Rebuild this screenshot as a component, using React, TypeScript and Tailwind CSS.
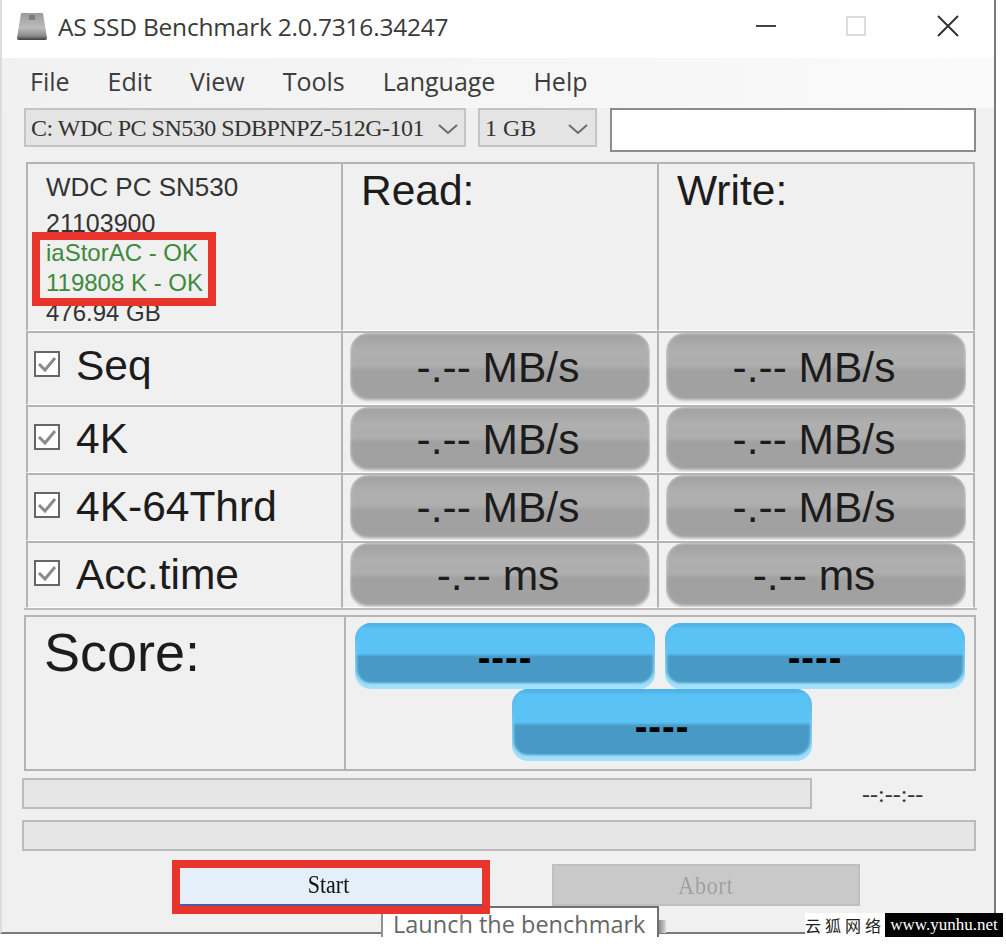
import React from "react";

const MENU = ["File", "Edit", "View", "Tools", "Language", "Help"];

function Chevron() {
  return (
    <svg width="22" height="12" viewBox="0 0 22 12" fill="none" stroke="#6b6b6b" strokeWidth="2" className="mt-[3px] shrink-0">
      <path d="M2 2l9 8 9-8" />
    </svg>
  );
}

function Check() {
  return (
    <span className="mb-[5px] flex h-[26px] w-[26px] shrink-0 items-center justify-center border-2 border-[#666] bg-white">
      <svg width="20" height="18" viewBox="0 0 20 18" fill="none" stroke="#8a8a8a" strokeWidth="3">
        <path d="M2 9l6 6L18 3" />
      </svg>
    </span>
  );
}

function GrayValue({ text, tall }: { text: string; tall: boolean }) {
  return (
    <div className={`relative mx-auto w-[300px] overflow-hidden rounded-[18px] ${tall ? "h-[70px]" : "h-[66px]"}`}>
      <div className="absolute inset-x-0 top-0 bottom-[3px] overflow-hidden rounded-[18px] blur-[1.5px]">
        <div className="h-[52%] bg-gradient-to-b from-[#a0a0a0] via-[#afafaf] to-[#adadad]" />
        <div className="h-[48%] bg-[#a1a1a1]" />
      </div>
      <div className="relative flex h-full items-center justify-center pr-[4px] text-[42.5px] leading-none text-[#1c1c1c]">
        {text}
      </div>
    </div>
  );
}

function BlueValue({ className }: { className: string }) {
  return (
    <div className={`relative overflow-hidden rounded-[16px] bg-gradient-to-b from-[#4fb2e6] to-[#a5e2fb] ${className}`}>
      <div className="absolute inset-x-[2px] top-0 bottom-[6px] flex flex-col overflow-hidden rounded-[14px] blur-[1px]">
        <div className="flex-1 border-t-[4px] border-[#4fb2e6] bg-[#5bc2f5]" />
        <div className="flex-1 bg-[#4899c6]" />
      </div>
      <div className="relative flex h-full items-center justify-center pt-[4px] text-[38px] font-bold leading-none tracking-[1px] text-[#000]">
        ----
      </div>
    </div>
  );
}

const cell = "border-t-2 border-l-2 border-b border-t-[#b4b4b4] border-l-[#b4b4b4] border-b-white";

const ROWS = [
  { label: "Seq", unit: "-.-- MB/s" },
  { label: "4K", unit: "-.-- MB/s" },
  { label: "4K-64Thrd", unit: "-.-- MB/s" },
  { label: "Acc.time", unit: "-.-- ms" },
];

export default function App() {
  return (
    <div className="relative h-[948px] w-[1006px] overflow-hidden bg-white font-['Liberation_Sans',Arial,sans-serif]">
      <div className="flex h-[934px] w-[996px] flex-col border-r-2 border-b-2 border-l-2 border-r-[#7a7a7a] border-b-[#7a7a7a] border-l-[#dcdcdc] bg-[#f0f0f0]">
        {/* title bar */}
        <div className="flex h-[58px] shrink-0 items-center bg-white pb-[4px] pl-[14px] font-['Open_Sans',sans-serif] text-[#3a3a3a]">
          <svg width="32" height="28" viewBox="0 0 32 28" className="mb-[2px]">
            <defs>
              <linearGradient id="drive" x1="0" y1="0" x2="0" y2="1">
                <stop offset="0" stopColor="#9a9a9a" />
                <stop offset="0.55" stopColor="#bcbcbc" />
                <stop offset="0.85" stopColor="#8a8a8a" />
                <stop offset="1" stopColor="#3c3c3c" />
              </linearGradient>
            </defs>
            <path d="M5 1h22l4 25q0 2-2 2H3q-2 0-2-2z" fill="url(#drive)" />
            <path d="M13 3h6v5h-6z" fill="#7c7c7c" />
          </svg>
          <span className="ml-[10px] text-[24.5px] leading-none tracking-[-0.2px]">AS SSD Benchmark 2.0.7316.34247</span>
          <div className="ml-auto flex items-center pb-[2px]">
            <span className="h-[2px] w-[20px] bg-[#444]" />
            <span className="ml-[70px] h-[20px] w-[20px] border-2 border-[#dddddd]" />
            <svg width="22" height="22" viewBox="0 0 22 22" stroke="#333" strokeWidth="2" className="mr-[35px] ml-[71px]">
              <path d="M1 1l20 20M21 1L1 21" />
            </svg>
          </div>
        </div>

        {/* menu */}
        <div className="flex h-[50px] shrink-0 items-center gap-[38px] bg-gradient-to-r from-[#f1f1f1] to-[#fafafa] pb-[3px] pl-[28px] font-['Open_Sans',sans-serif] text-[25px] text-[#3c3c3c]">
          {MENU.map((m) => (
            <span key={m}>{m}</span>
          ))}
        </div>

        {/* selects */}
        <div className="flex h-[54px] shrink-0 items-start pl-[22px] font-['Liberation_Serif',serif] text-[24px] text-[#333]">
          <div className="flex h-[39px] w-[442px] items-center justify-between whitespace-nowrap border-2 border-[#c4c4c4] bg-[#e4e4e4] px-[5px]">
            <span className="tracking-[-0.5px]">C: WDC PC SN530 SDBPNPZ-512G-101</span>
            <Chevron />
          </div>
          <div className="ml-[12px] flex h-[39px] w-[119px] items-center justify-between border-2 border-[#c4c4c4] bg-[#e4e4e4] pr-[6px] pl-[5px]">
            <span>1 GB</span>
            <Chevron />
          </div>
          <div className="ml-[13px] h-[44px] w-[366px] border-2 border-[#8c8c8c] bg-white" />
        </div>

        {/* results */}
        <div className="ml-[22px] w-[953px] border-b-2 border-[#bcbcbc] pl-[2px]">
          <div className="grid w-[949px] grid-cols-[315px_316px_318px] grid-rows-[169px_74px_68px_68px_67px] text-[#1c1c1c]">
            <div className={`${cell} pt-[5px] pl-[18px]`}>
              <div className="h-[36px] text-[26px] leading-[36px] text-[#333]">WDC PC SN530</div>
              <div className="h-[33px] text-[25px] leading-[36px] text-[#333]">21103900</div>
              <div className="h-[30px] text-[24px] leading-[30px] text-[#3d8a3d]">iaStorAC - OK</div>
              <div className="h-[30px] text-[24px] leading-[30px] text-[#3d8a3d]">119808 K - OK</div>
              <div className="text-[24px] leading-[30px] text-[#333]">476.94 GB</div>
            </div>
            <div className={`${cell} pt-[3px] pl-[18px] text-[42.5px] leading-[48px]`}>Read:</div>
            <div className={`${cell} border-r-2 border-r-[#b4b4b4] pt-[3px] pl-[18px] text-[42.5px] leading-[48px]`}>Write:</div>

            {ROWS.map((r) => (
              <React.Fragment key={r.label}>
                <div className={`${cell} flex items-center gap-[16px] pl-[6px] text-[42.5px] leading-none ${r.label === "Seq" ? "pb-[5px]" : ""}`}>
                  <Check />
                  <span>{r.label}</span>
                </div>
                <div className={cell}>
                  <GrayValue text={r.unit} tall={r.label === "Seq"} />
                </div>
                <div className={`${cell} border-r-2 border-r-[#b4b4b4]`}>
                  <GrayValue text={r.unit} tall={r.label === "Seq"} />
                </div>
              </React.Fragment>
            ))}
          </div>
        </div>

        {/* score */}
        <div className="mt-[5px] ml-[22px] flex h-[156px] w-[952px] border-2 border-[#b4b4b4]">
          <div className="w-[320px] border-r-2 border-[#b4b4b4] pt-[5px] pl-[18px] text-[54px] leading-[60px] text-[#1c1c1c]">Score:</div>
          <div className="flex flex-1 flex-wrap content-start justify-center gap-x-[10px] pt-[6px]">
            <BlueValue className="h-[66px] w-[300px]" />
            <BlueValue className="h-[66px] w-[300px]" />
            <BlueValue className="ml-[4px] h-[72px] w-[300px]" />
          </div>
        </div>

        {/* progress */}
        <div className="mt-[7px] ml-[20px] flex items-center">
          <div className="h-[31px] w-[790px] border-2 border-[#bcbcbc] bg-[#e6e6e6]" />
          <span className="ml-[50px] font-['Liberation_Serif',serif] text-[24px] leading-none text-[#333]">--:--:--</span>
        </div>
        <div className="mt-[11px] ml-[20px] h-[31px] w-[954px] border-2 border-[#bcbcbc] bg-[#e6e6e6]" />

        {/* buttons */}
        <div className="mt-[13px] ml-[174px] flex gap-[66px] font-['Liberation_Serif',serif] text-[22px]">
          <button className="h-[42px] w-[310px] border-b-2 border-[#4d5aa5] bg-[#e5eff9] pr-[5px] text-[#111]">
            <span className="inline-block scale-y-[1.15]">Start</span>
          </button>
          <button className="h-[42px] w-[308px] border-2 border-[#bfbfbf] bg-[#c9c9c9] tracking-[0.8px] text-[#a0a0a0]">
            <span className="inline-block scale-y-[1.15]">Abort</span>
          </button>
        </div>
      </div>

      {/* tooltip */}
      <div className="absolute top-[906px] left-[381px] h-[31px] w-[278px] overflow-hidden border-t-2 border-r-2 border-l-2 border-t-[#707070] border-r-[#707070] border-l-[#909090] bg-white pl-[10px] font-['Open_Sans',sans-serif] text-[23.5px] leading-[32px] whitespace-nowrap text-[#666]">
        Launch the benchmark
      </div>
      <div className="absolute top-[920px] left-[659px] h-[13px] w-[7px] bg-gradient-to-r from-[#8a8a8a] to-[#dcdcdc]" />
      <div className="absolute top-[912px] left-[461px] h-[21px] w-px bg-[#8a8a8a]" />

      {/* red annotations */}
      <div className="absolute top-[232px] left-[32px] h-[74px] w-[184px] border-[8px] border-[#e8342a]" />
      <div className="absolute top-[860px] left-[172px] h-[54px] w-[318px] border-[8px] border-[#e8342a]" />

      {/* watermark */}
      <div className="absolute top-[913px] left-[805px] flex h-[24px]">
        <div className="flex w-[80px] items-center justify-center bg-white font-['Noto_Sans_CJK_SC',sans-serif] text-[16px] tracking-[4px] text-[#222]">云狐网络</div>
        <div className="flex w-[118px] items-center justify-center bg-black font-['Liberation_Serif',serif] text-[17px] text-white">www.yunhu.net</div>
      </div>
    </div>
  );
}
